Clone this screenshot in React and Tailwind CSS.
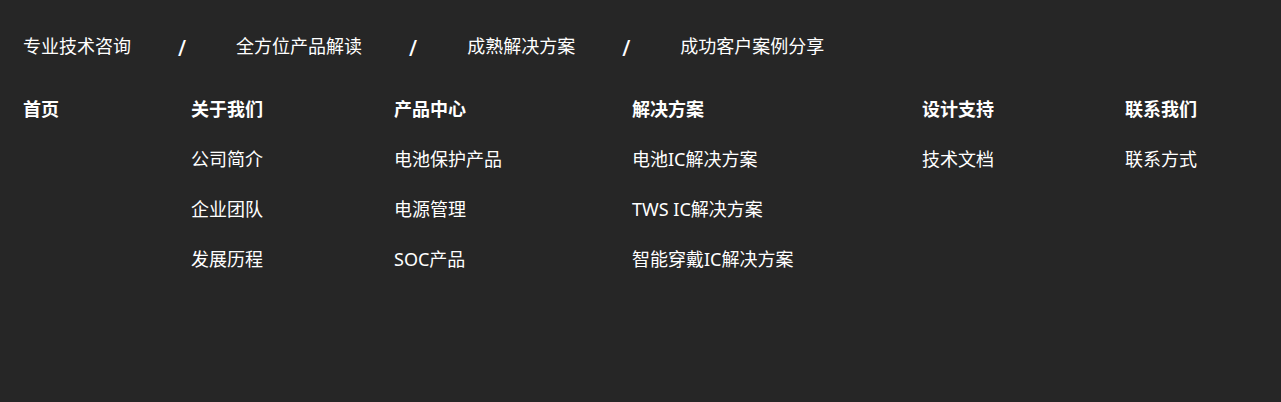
import React from "react";

const top = ["专业技术咨询", "全方位产品解读", "成熟解决方案", "成功客户案例分享"];

const cols = [
  { title: "首页", items: [], w: "w-[168px]" },
  { title: "关于我们", items: ["公司简介", "企业团队", "发展历程"], w: "w-[203px]" },
  { title: "产品中心", items: ["电池保护产品", "电源管理", "SOC产品"], w: "w-[238px]" },
  { title: "解决方案", items: ["电池IC解决方案", "TWS IC解决方案", "智能穿戴IC解决方案"], w: "w-[290px]" },
  { title: "设计支持", items: ["技术文档"], w: "w-[203px]" },
  { title: "联系我们", items: ["联系方式"], w: "w-[120px]" },
];

export default function App() {
  return (
    <div
      className="w-[1281px] h-[402px] bg-[#262626] text-white pt-[34px] px-[23px]"
      style={{ fontFamily: '"Noto Sans", "Noto Sans CJK SC", sans-serif' }}
    >
      <div className="flex items-center text-[18px] leading-[24px]">
        {top.map((t, i) => (
          <React.Fragment key={t}>
            <span>{t}</span>
            {i < top.length - 1 && (
              <span className="ml-[47px] mr-[50px] text-[21px] font-medium leading-[24px] translate-y-[2px]">/</span>
            )}
          </React.Fragment>
        ))}
      </div>
      <div className="flex mt-[26px] text-[18px]">
        {cols.map((c) => (
          <div key={c.title} className={`flex flex-col shrink-0 ${c.w}`}>
            <div className="font-bold leading-[50px]">{c.title}</div>
            {c.items.map((it) => (
              <div key={it} className="leading-[50px] whitespace-nowrap">
                {it}
              </div>
            ))}
          </div>
        ))}
      </div>
    </div>
  );
}
